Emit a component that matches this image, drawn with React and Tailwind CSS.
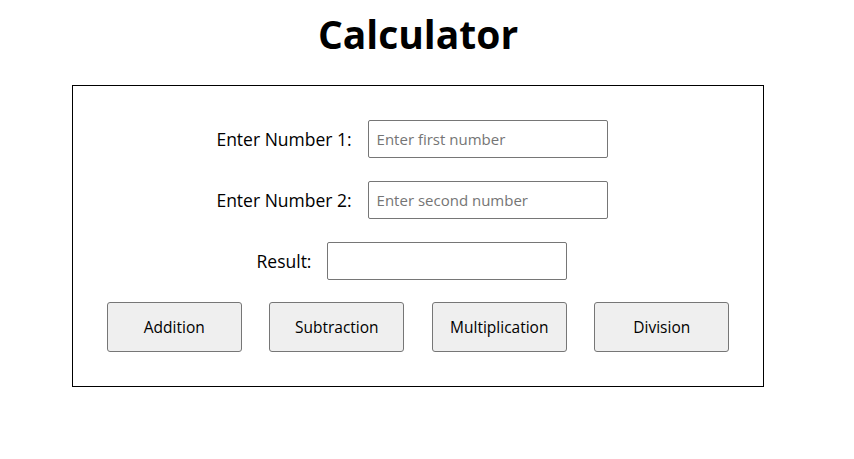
import React, { useState } from 'react';

const font = { fontFamily: '"Open Sans", "DejaVu Sans", sans-serif' };

const Row = ({ label, placeholder, value, onChange, readOnly }) => (
  <div className="flex items-center justify-center gap-4 pr-3">
    <label className="text-[17.5px] text-black">{label}</label>
    <input
      type="text"
      value={value}
      onChange={onChange}
      readOnly={readOnly}
      placeholder={placeholder}
      className="w-[240px] h-[38px] border border-[#767676] rounded-[2px] px-2 text-[15px] text-black placeholder:text-[#757575] bg-white outline-none"
    />
  </div>
);

const App = () => {
  const [a, setA] = useState('');
  const [b, setB] = useState('');
  const [result, setResult] = useState('');

  const calc = (op) => {
    const x = parseFloat(a);
    const y = parseFloat(b);
    if (isNaN(x) || isNaN(y)) return setResult('');
    if (op === '+') setResult(String(x + y));
    if (op === '-') setResult(String(x - y));
    if (op === '*') setResult(String(x * y));
    if (op === '/') setResult(String(x / y));
  };

  const buttons = [
    ['Addition', '+'],
    ['Subtraction', '-'],
    ['Multiplication', '*'],
    ['Division', '/'],
  ];

  return (
    <div className="w-[854px] h-[459px] bg-white" style={font}>
      <div className="w-[836px]">
        <h1 className="h-[70px] pt-[11px] text-center text-[39px] leading-[46px] font-bold text-black">
          Calculator
        </h1>

        {/* Card */}
        <div className="mx-auto mt-[15px] w-[692px] h-[302px] border border-black pt-[34px]">
          <div className="flex flex-col gap-[23px]">
            <Row
              label="Enter Number 1:"
              placeholder="Enter first number"
              value={a}
              onChange={(e) => setA(e.target.value)}
            />
            <Row
              label="Enter Number 2:"
              placeholder="Enter second number"
              value={b}
              onChange={(e) => setB(e.target.value)}
            />
            <Row label="Result:" value={result} readOnly />
          </div>

          <div className="flex justify-center gap-[27.5px] mt-[22px]">
            {buttons.map(([name, op]) => (
              <button
                key={name}
                onClick={() => calc(op)}
                className="w-[135px] h-[50px] pt-[2px] bg-[#efefef] border border-[#767676] rounded-[3px] text-[15.5px] text-black"
              >
                {name}
              </button>
            ))}
          </div>
        </div>
      </div>
    </div>
  );
};

export default App;
